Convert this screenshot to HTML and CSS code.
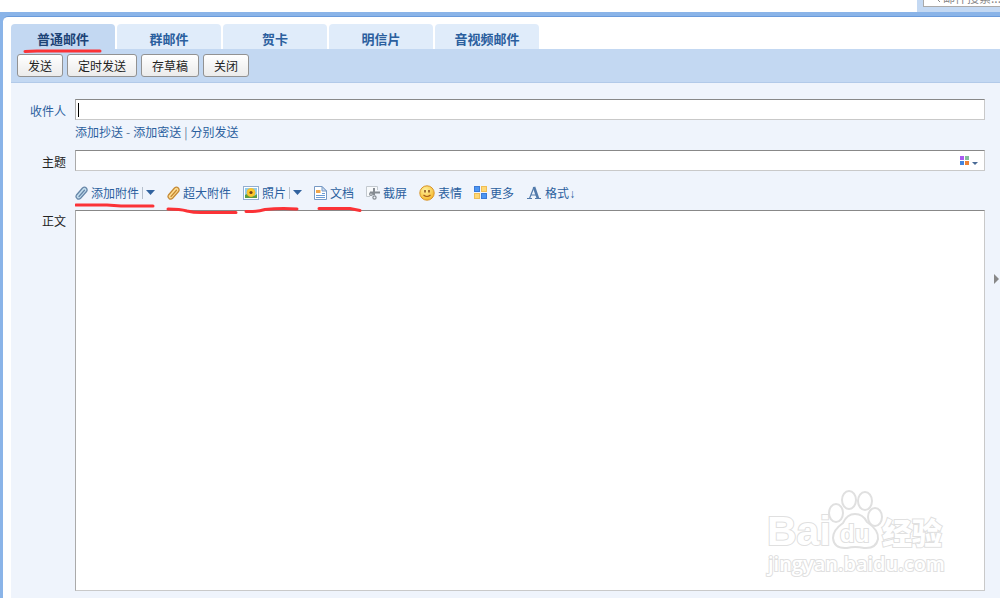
FILE: index.html
```html
<!DOCTYPE html>
<html lang="zh-CN">
<head>
    <meta charset="UTF-8">
    <meta name="viewport" content="width=device-width, initial-scale=1.0">
    <title>写邮件</title>
    <link rel="stylesheet" href="styles.css">
</head>
<body>
    <header class="topbar">
        <div class="search-area">
            <label class="search-box">
                <svg class="search-icon" width="9" height="9" viewBox="0 0 9 9"><circle cx="3.5" cy="3.5" r="2.8"/><path d="M5.5 5.5L9 9"/></svg>
                <input type="text" class="search-input" placeholder="邮件搜索..." aria-label="邮件搜索">
            </label>
        </div>
    </header>
    <div class="frame">
        <main class="panel">
            <nav class="tabs">
                <a href="#" class="tab active">普通邮件
                    <svg class="mark mark-tab" width="80" height="6" viewBox="0 0 80 6"><path d="M2 3.5L14 3H77"/></svg>
                </a>
                <a href="#" class="tab">群邮件</a>
                <a href="#" class="tab">贺卡</a>
                <a href="#" class="tab">明信片</a>
                <a href="#" class="tab">音视频邮件</a>
            </nav>
            <div class="toolbar">
                <button type="button" class="btn">发送</button>
                <button type="button" class="btn">定时发送</button>
                <button type="button" class="btn">存草稿</button>
                <button type="button" class="btn">关闭</button>
            </div>
            <form class="compose">
                <label class="label link" for="to">收件人</label>
                <div class="field">
                    <input type="text" id="to" class="text-input">
                    <span class="caret"></span>
                </div>

                <div class="cc-links">
                    <a href="#">添加抄送</a><span>-</span><a href="#">添加密送</a><span>|</span><a href="#">分别发送</a>
                </div>

                <label class="label" for="subject">主题</label>
                <div class="field">
                    <input type="text" id="subject" class="text-input">
                    <button type="button" class="color-btn" aria-label="颜色">
                        <svg width="19" height="11" viewBox="0 0 19 11">
                            <rect width="4" height="4" fill="#a95bf0"/><rect x="5" width="4" height="4" fill="#84bd9c"/>
                            <rect y="5" width="4" height="4" fill="#4484dc"/><rect x="5" y="5" width="4" height="4" fill="#ee8234"/>
                            <path d="M12 6h6l-3 3z" fill="#496a96"/>
                        </svg>
                    </button>
                </div>

                <div class="tools">
                    <a href="#" class="tool">
                        <svg class="clip" width="13" height="14" viewBox="0 0 13 14">
                            <path d="M1.5 9L7.5 2Q9.5.4 11.3 2Q12.8 3.8 11.5 5.5L5.8 12Q4 13.8 2.2 12.6Q.2 11 1.5 9z" fill="#c3deef" stroke="#6686a8" stroke-width="1.3"/>
                            <path d="M4 10.5L9.5 4.2" stroke="#6686a8" stroke-width="1.3"/>
                        </svg>
                        添加附件
                        <span class="split"></span>
                        <svg width="9" height="5" viewBox="0 0 9 5"><path d="M0 0h9L4.5 5z" fill="#32639f"/></svg>
                    </a>
                    <a href="#" class="tool">
                        <svg class="clip" width="13" height="14" viewBox="0 0 13 14">
                            <path d="M1.5 9L7.5 2Q9.5.4 11.3 2Q12.8 3.8 11.5 5.5L5.8 12Q4 13.8 2.2 12.6Q.2 11 1.5 9z" fill="#ffdf94" stroke="#c58933" stroke-width="1.3"/>
                            <path d="M4 10.5L9.5 4.2" stroke="#c58933" stroke-width="1.3"/>
                        </svg>
                        超大附件
                    </a>
                    <a href="#" class="tool">
                        <svg width="16" height="14" viewBox="0 0 16 14">
                            <rect x=".5" y=".5" width="15" height="13" fill="#fff" stroke="#92aed1"/>
                            <rect x="2" y="2" width="12" height="10" fill="#91cce9"/>
                            <path d="M2 9q3-2 6 0t6-1v4H2z" fill="#5d9c40"/>
                            <circle cx="8" cy="6.5" r="4" fill="#ffc927" stroke="#f0bd35"/>
                            <circle cx="8" cy="6.5" r="1.6" fill="#774112"/>
                        </svg>
                        照片
                        <span class="split"></span>
                        <svg width="9" height="5" viewBox="0 0 9 5"><path d="M0 0h9L4.5 5z" fill="#32639f"/></svg>
                    </a>
                    <a href="#" class="tool">
                        <svg width="13" height="14" viewBox="0 0 13 14">
                            <path d="M.5.5H8L12.5 5V13.5H.5z" fill="#fff" stroke="#7799c4"/>
                            <path d="M8 .5V5h4.5z" fill="#cfdef2" stroke="#7799c4"/>
                            <path d="M2 4h4.5v3H2z" fill="#f0a64a"/>
                            <path d="M2 9.5h9M2 11.5h9M8 7.5h3" stroke="#6b9bd4"/>
                        </svg>
                        文档
                    </a>
                    <a href="#" class="tool">
                        <svg width="14" height="14" viewBox="0 0 14 14" fill="none">
                            <path d="M11.5 4V.5H.5v10H4" stroke="#c3c9cf" fill="#f8fafc"/>
                            <path d="M8 2v7M4 6.5h10" stroke="#858b92" stroke-width="2"/>
                            <circle cx="5" cy="8" r="1.4" stroke="#858b92" stroke-width="1.2"/>
                            <circle cx="8.5" cy="11.5" r="1.6" stroke="#858b92" stroke-width="1.2"/>
                        </svg>
                        截屏
                    </a>
                    <a href="#" class="tool">
                        <svg width="16" height="16" viewBox="0 0 16 16">
                            <defs><radialGradient id="face" cx=".4" cy=".3" r=".7"><stop stop-color="#fff3a0"/><stop offset="1" stop-color="#f5b82d"/></radialGradient></defs>
                            <circle cx="8" cy="8" r="7.2" fill="url(#face)" stroke="#d8942b"/>
                            <path d="M6 5v2.5M10 5v2.5" stroke="#7b3b10" stroke-width="1.4"/>
                            <path d="M4.5 10q3.5 3 7 0" fill="none" stroke="#a65b18" stroke-width="1.2"/>
                        </svg>
                        表情
                    </a>
                    <a href="#" class="tool">
                        <svg width="13" height="13" viewBox="0 0 13 13">
                            <rect x=".5" y=".5" width="5" height="5" fill="#4b95f2" stroke="#3b7ad6"/>
                            <rect x="7.5" y=".5" width="5" height="5" fill="#ffd875" stroke="#efbd55"/>
                            <rect x=".5" y="7.5" width="5" height="5" fill="#ffd875" stroke="#efbd55"/>
                            <rect x="7.5" y="7.5" width="5" height="5" fill="#4b95f2" stroke="#3b7ad6"/>
                        </svg>
                        更多
                    </a>
                    <a href="#" class="tool">
                        <svg width="16" height="14" viewBox="0 0 16 14">
                            <path d="M8 1L3.5 12.5M5 9h6" stroke="#527aab" stroke-width="1.2"/>
                            <path d="M8 1l4 11.5" stroke="#527aab" stroke-width="2.6"/>
                            <path d="M1 12.5h5M9 12.5h6" stroke="#527aab" stroke-width="1.2"/>
                        </svg>
                        <span>格式<span class="down">↓</span></span>
                    </a>
                    <svg class="mark mark-tools" width="290" height="14" viewBox="0 0 290 14">
                        <path d="M1 4L32 4L46 5H78M93 8Q105 8 112 10Q120 12 130 11.5H161M171 10.5Q182 11 190 8.5Q205 7 222 8M244 7.5H275L285 9.5"/>
                    </svg>
                </div>

                <label class="label label-body" for="body">正文</label>
                <div class="field">
                    <textarea id="body" class="editor"></textarea>
                    <svg class="watermark" width="184" height="92" viewBox="0 0 184 92">
                        <text x="2" y="58" font-size="41">Bai</text>
                        <ellipse cx="71" cy="26" rx="7" ry="9"/>
                        <ellipse cx="84" cy="13" rx="7" ry="9"/>
                        <ellipse cx="100" cy="14" rx="7" ry="9"/>
                        <ellipse cx="110" cy="30" rx="7" ry="9"/>
                        <path d="M90 27Q98 27 102 35Q114 43 113 52Q111 62 99 61Q90 59 82 61Q69 62 68 51Q68 43 78 36Q82 27 90 27z"/>
                        <text x="75" y="55" font-size="24">du</text>
                        <text x="117" y="57" font-size="30" class="watermark-cn">经验</text>
                        <text x="3" y="84" font-size="20" class="watermark-url">jingyan.baidu.com</text>
                    </svg>
                </div>
            </form>
            <button type="button" class="expand" aria-label="展开"></button>
        </main>
    </div>
</body>
</html>
```
FILE: styles.css
```css
* {
    box-sizing: border-box;
}
body {
    margin: 0;
    min-height: 100vh;
    display: flex;
    flex-direction: column;
    font-family: "Noto Sans CJK SC", sans-serif;
    font-size: 12px;
    background-color: #fff;
    color: #222;
}
a {
    color: #2b5f9e;
    text-decoration: none;
}
button, input, textarea {
    font-family: inherit;
    font-size: 12px;
}

/* top strip */
.topbar {
    height: 12px;
    display: flex;
    justify-content: flex-end;
    overflow: hidden;
}
.search-area {
    width: 83px;
    padding: 0 0 5px 6px;
    display: flex;
    align-items: flex-end;
    background-color: #c4d9f3;
}
.search-box {
    flex: none;
    width: 120px;
    height: 20px;
    display: flex;
    align-items: center;
    gap: 3px;
    padding-left: 7px;
    border: 1px solid #aaa;
    background-color: #fff;
}
.search-icon {
    fill: none;
    stroke: #888;
}
.search-input {
    width: 90px;
    padding: 0;
    border: none;
    background: none;
}
.search-input::placeholder {
    color: #888;
}

.frame {
    flex: 1;
    display: flex;
    padding: 4px 0 0 3px;
    background-color: #8ab4e8;
}
.panel {
    position: relative;
    flex: 1;
    display: flex;
    flex-direction: column;
    padding: 7px 0 0 8px;
    border-top: 1px solid #6a9bdb;
    border-top-left-radius: 5px;
    background-color: #fff;
}

/* tabs */
.tabs {
    display: flex;
    gap: 2px;
}
.tab {
    position: relative;
    width: 104px;
    height: 25px;
    padding-top: 2px;
    line-height: 25px;
    text-align: center;
    font-size: 13px;
    font-weight: bold;
    background-color: #e0ecfa;
    border-radius: 4px 4px 0 0;
}
.tab.active {
    color: #1c4376;
    background-color: #c3d8f2;
}

.toolbar {
    display: flex;
    gap: 4px;
    padding: 5px 6px;
    background-color: #c3d8f2;
    border-bottom: 1px solid #b2cae9;
}
.btn {
    height: 23px;
    padding: 1px 10px 0;
    line-height: 20px;
    color: #222;
    border: 1px solid #929292;
    border-radius: 3px;
    background: linear-gradient(#fff, #ebebeb);
}

/* compose form */
.compose {
    flex: 1;
    display: grid;
    grid-template-columns: 55px 1fr;
    grid-template-rows: 21px 30px 21px 39px 1fr;
    column-gap: 9px;
    padding: 16px 15px 7px 0;
    background-color: #eff4fc;
}
.label {
    text-align: right;
    line-height: 24px;
}
.label.link {
    color: #2b5f9e;
}
.field {
    position: relative;
    display: flex;
}
.text-input {
    width: 100%;
    height: 21px;
    padding: 0 4px;
}
.text-input, .editor {
    border: 1px solid;
    border-color: #888 #c9c9c9 #c9c9c9 #aaa;
    border-radius: 0;
    background-color: #fff;
    outline: none;
}
.caret {
    position: absolute;
    left: 3px;
    top: 4px;
    width: 1px;
    height: 14px;
    background-color: #000;
}
.cc-links {
    grid-column: 2;
    display: flex;
    gap: 3px;
    line-height: 24px;
    color: #5d7798;
}
.color-btn {
    position: absolute;
    right: 6px;
    top: 6px;
    display: flex;
    padding: 0;
    border: none;
    background: none;
}

.tools {
    position: relative;
    grid-column: 2;
    display: flex;
    align-items: center;
    gap: 12px;
    padding-top: 4px;
}
.tool {
    display: flex;
    align-items: center;
    gap: 3px;
    white-space: nowrap;
}
.clip {
    fill: none;
    stroke-linecap: round;
}
.split {
    width: 1px;
    height: 12px;
    background-color: #b5bfcc;
}
.down {
    font-family: "Liberation Sans", sans-serif;
}

.label-body {
    line-height: 22px;
}
.editor {
    width: 100%;
    padding: 4px;
    resize: none;
}

.expand {
    position: absolute;
    right: 1px;
    top: 257px;
    width: 0;
    height: 0;
    padding: 0;
    border: 5px solid transparent;
    border-left-color: #888;
    border-right: none;
    background: none;
}

/* hand drawn red lines */
.mark {
    position: absolute;
    z-index: 1;
    fill: none;
    stroke: #fb3236;
    stroke-width: 3;
    stroke-linecap: round;
    pointer-events: none;
}
.mark-tab {
    left: 12px;
    top: 24px;
}
.mark-tools {
    left: 0;
    top: 30px;
}

.watermark {
    position: absolute;
    right: 36px;
    bottom: 12px;
    fill: #fff;
    stroke: #e0e0e0;
    stroke-width: 2;
    pointer-events: none;
}
.watermark text {
    font-family: "Liberation Sans", sans-serif;
    font-weight: bold;
    paint-order: stroke;
}
.watermark .watermark-cn {
    font-family: "Noto Sans CJK SC", sans-serif;
    font-weight: 900;
}
.watermark .watermark-url {
    font-family: "Open Sans", sans-serif;
    font-weight: 600;
}
```
